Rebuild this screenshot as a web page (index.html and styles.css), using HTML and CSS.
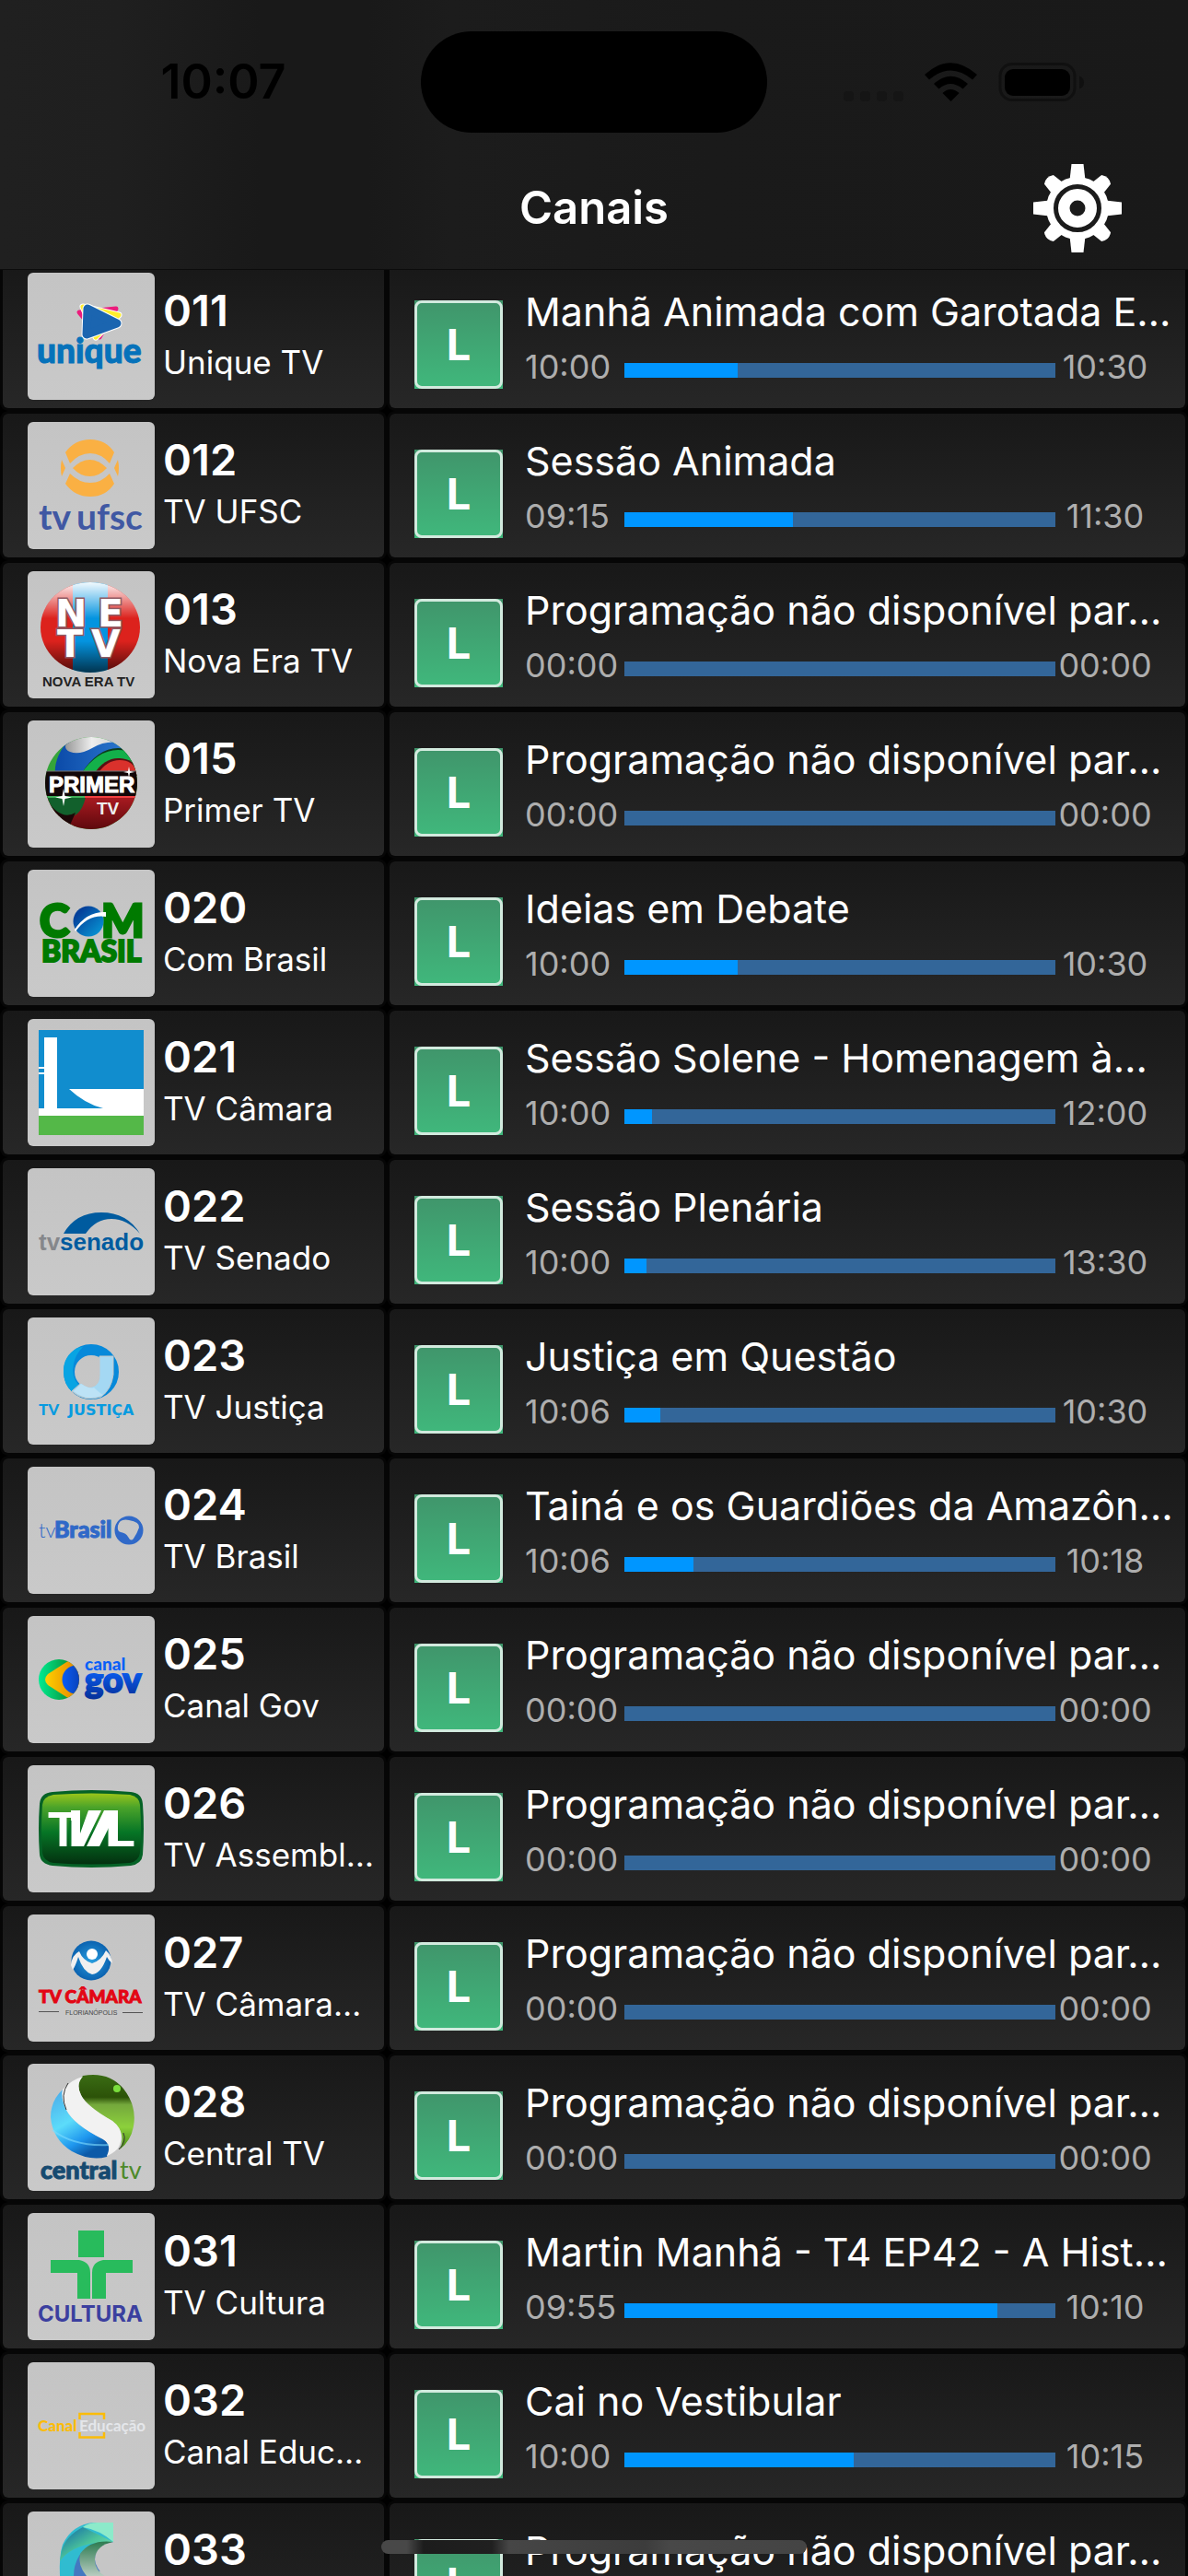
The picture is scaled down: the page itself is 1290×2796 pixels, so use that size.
FILE: index.html
```html
<!DOCTYPE html>
<html lang="pt-BR">
<head>
<meta charset="utf-8">
<meta name="viewport" content="width=device-width, initial-scale=1">
<title>Canais</title>
<link rel="stylesheet" href="styles.css">
</head>
<body>
<div class="app">
<header class="topbar">
  <div class="status">
    <time class="clock">10:07</time>
    <div class="island"></div>
    <svg class="status-icons" viewBox="0 0 264 48" aria-hidden="true">
      <g fill="#151515"><rect x="0" y="34" width="11" height="11" rx="4"/><rect x="18" y="34" width="11" height="11" rx="4"/><rect x="36" y="34" width="11" height="11" rx="4"/><rect x="54" y="34" width="11" height="11" rx="4"/></g>
      <path d="M88 16Q116 -9.500 145 16L140 21.500Q116 1.500 93 21.500Z M98 26Q116 9.500 135 26L129.500 31.500Q116 20.500 103.500 31.500Z M107.500 36Q116 28 125.500 36L116.500 45Z" fill="#000"/>
      <rect x="170" y="4.500" width="81" height="39" rx="13" fill="none" stroke="#101010" stroke-width="3"/>
      <rect x="175" y="10" width="71" height="29" rx="9" fill="#000"/>
      <path d="M256 17.500Q261 19.500 261 24.500T256 31.500Z" fill="#101010"/>
    </svg>
  </div>
  <div class="titlebar">
    <h1>Canais</h1>
    <button class="settings" type="button" aria-label="Configurações">
      <svg viewBox="0 0 96 96" aria-hidden="true">
        <g fill="#fff">
          <path d="M41.500 0H54.500L57 22H39Z"/><path d="M41.500 96H54.500L57 74H39Z"/><path d="M0 41.500V54.500L22 57V39Z"/><path d="M96 41.500V54.500L74 57V39Z"/>
          <g transform="rotate(45 48 48)"><path d="M41 4Q48 -1 55 4L57 22H39Z"/><path d="M41 92Q48 97 55 92L57 74H39Z"/><path d="M4 41Q-1 48 4 55L22 57V39Z"/><path d="M92 41Q97 48 92 55L74 57V39Z"/></g>
          <circle cx="48" cy="48" r="34"/>
        </g>
        <circle cx="48" cy="48" r="23.500" fill="none" stroke="#1b1b1b" stroke-width="5"/>
        <circle cx="48" cy="48" r="8.500" fill="#1b1b1b"/>
      </svg>
    </button>
  </div>
</header>

<main class="guide">
<ul class="rows">
<li class="row">
  <div class="card channel">
    <svg class="logo" viewBox="0 0 138 138" aria-hidden="true">
      <g stroke-linejoin="round">
      <path d="M56 43L96 39L78 70Z" fill="#ec1c7c" stroke="#ec1c7c" stroke-width="5"/>
      <path d="M60 37L99 46L74 70Z" fill="#ffee2e" stroke="#fff" stroke-width="7"/>
      <path d="M60 37L99 46L74 70Z" fill="#ffee2e" stroke="#ffee2e" stroke-width="5"/>
      <path d="M65 39L97 55L64 67Z" fill="#fff" stroke="#fff" stroke-width="11"/>
      <path d="M65 39L97 55L64 67Z" fill="#1b65b0" stroke="#1b65b0" stroke-width="9"/></g>
      <text x="10" y="98" font-family="Lato" font-weight="900" font-size="37" fill="#0672ba" stroke="#0672ba">unique</text>
    </svg>
    <div class="ident"><strong class="num">011</strong><span class="name">Unique TV</span></div>
  </div>
  <div class="card show">
    <span class="badge"><b>L</b></span>
    <div class="info"><h2>Manhã Animada com Garotada E…</h2>
    <div class="slot"><time>10:00</time><progress max="468" value="123" aria-label="Progresso"></progress><time class="end">10:30</time></div></div>
  </div>
</li>
<li class="row">
  <div class="card channel">
    <svg class="logo" viewBox="0 0 138 138" aria-hidden="true">
      <g fill="#fab043"><path d="M41 33Q51 19 68 19T94 33L89 45Q80 34 68 34T46 45Z"/><path d="M41 67Q51 81 68 81T94 67L89 56Q80 66 68 66T46 56Z"/><path d="M49 50Q58 41 67.500 41T86 50Q78 59 67.500 59T49 50Z"/><path d="M37 41L41 50L37 59Q35 50 37 41Z"/><path d="M98 41L94 50L98 59Q100 50 98 41Z"/></g>
      <g font-family="Lato" font-weight="700" font-size="39" fill="#4058a3"><text x="12" y="117">tv</text><text x="53" y="117">ufsc</text></g>
    </svg>
    <div class="ident"><strong class="num">012</strong><span class="name">TV UFSC</span></div>
  </div>
  <div class="card show">
    <span class="badge"><b>L</b></span>
    <div class="info"><h2>Sessão Animada</h2>
    <div class="slot"><time>09:15</time><progress max="468" value="183" aria-label="Progresso"></progress><time class="end">11:30</time></div></div>
  </div>
</li>
<li class="row">
  <div class="card channel">
    <svg class="logo" viewBox="0 0 138 138" aria-hidden="true">
      <defs>
        <linearGradient id="ne"><stop offset=".32" stop-color="#dc221d"/><stop offset=".32" stop-color="#0494e0"/><stop offset=".68" stop-color="#0494e0"/><stop offset=".68" stop-color="#dc221d"/></linearGradient>
        <linearGradient id="neshine" x2="0" y2="1"><stop offset="0" stop-color="#fff" stop-opacity=".95"/><stop offset=".4" stop-color="#fff" stop-opacity="0"/><stop offset=".65" stop-opacity="0"/><stop offset="1" stop-opacity=".65"/></linearGradient>
      </defs>
      <ellipse cx="68" cy="61" rx="54" ry="49" fill="url(#ne)"/><ellipse cx="68" cy="61" rx="54" ry="49" fill="url(#neshine)"/>
      <g font-family="DejaVu Sans" font-weight="700" font-size="41" fill="#fff" stroke="#8f5a62" stroke-width="3" paint-order="stroke"><text x="30" y="60">N</text><text x="76" y="60">E</text><text x="32" y="93">T</text><text x="69" y="93">V</text></g>
      <text x="16" y="125" font-family="Liberation Sans" font-weight="700" font-size="15" fill="#222">NOVA ERA TV</text>
    </svg>
    <div class="ident"><strong class="num">013</strong><span class="name">Nova Era TV</span></div>
  </div>
  <div class="card show">
    <span class="badge"><b>L</b></span>
    <div class="info"><h2>Programação não disponível par…</h2>
    <div class="slot"><time>00:00</time><progress max="468" value="0" aria-label="Progresso"></progress><time class="end">00:00</time></div></div>
  </div>
</li>
<li class="row">
  <div class="card channel">
    <svg class="logo" viewBox="0 0 138 138" aria-hidden="true">
      <defs><clipPath id="pc"><circle cx="69" cy="68" r="50"/></clipPath>
      <linearGradient id="pblue"><stop offset="0" stop-color="#0b4aa8"/><stop offset="1" stop-color="#2d7ad0"/></linearGradient>
      <linearGradient id="pred" x2="0" y2="1"><stop offset="0" stop-color="#b01c22"/><stop offset="1" stop-color="#5a080c"/></linearGradient>
      <linearGradient id="psil"><stop offset="0" stop-color="#999"/><stop offset=".5" stop-color="#eee"/><stop offset="1" stop-color="#ccc"/></linearGradient></defs>
      <g clip-path="url(#pc)"><rect x="19" y="18" width="100" height="100" fill="#35a53a"/>
      <path d="M30 60Q28 42 42 24L108 20L112 32Q82 26 58 60Z" fill="url(#pblue)"/>
      <path d="M58 58Q76 30 98 30T119 50V60H58Z" fill="#0c3d1c"/><path d="M58 58Q76 32 98 32T119 46V60H58Z" fill="#13b04a"/>
      <path d="M72 58Q84 40 100 41T119 54V60H72Z" fill="#5a1013"/><path d="M76 58Q86 43 100 43T119 56V60H76Z" fill="#da312c"/>
      <path d="M41 28Q42 16 72 16T98 24Q84 22 70 30T46 34Q41 32 41 28Z" fill="url(#psil)"/>
      <rect x="19" y="80" width="100" height="40" fill="url(#pred)"/><path d="M19 78H64Q60 104 44 105T19 78Z" fill="#12602c"/><path d="M19 84Q36 110 52 100L44 118H19Z" fill="#1c0607"/>
      <rect x="19" y="55" width="100" height="27" fill="#120708"/><path d="M19 55H119" stroke="#777" stroke-width="1"/><path d="M62 83H119" stroke="#f04040" stroke-width="2"/><path d="M19 83H62" stroke="#3fae58" stroke-width="2"/></g>
      <text x="23" y="78" font-family="Liberation Sans" font-weight="700" font-size="24" fill="#fff" stroke="#fff">PRIMER</text>
      <text x="75" y="102" font-family="Liberation Sans" font-weight="700" font-size="19" fill="#eee">TV</text>
      <path d="M110 50L111 55L116 56L111 57L110 62L109 57L104 56L109 55ZM39 74L40.500 82L48 83.500L40.500 85L39 93L37.500 85L30 83.500L37.500 82Z" fill="#fff"/>
    </svg>
    <div class="ident"><strong class="num">015</strong><span class="name">Primer TV</span></div>
  </div>
  <div class="card show">
    <span class="badge"><b>L</b></span>
    <div class="info"><h2>Programação não disponível par…</h2>
    <div class="slot"><time>00:00</time><progress max="468" value="0" aria-label="Progresso"></progress><time class="end">00:00</time></div></div>
  </div>
</li>
<li class="row">
  <div class="card channel">
    <svg class="logo" viewBox="0 0 138 138" aria-hidden="true">
      <defs><linearGradient id="cb" x2="1" y2="1"><stop offset=".2" stop-color="#04409a"/><stop offset="1" stop-color="#08a0dc"/></linearGradient></defs>
      <g font-family="Lato" font-weight="900" fill="#007a00" stroke="#007a00"><g font-size="49" stroke-width="3"><text x="13" y="73">C</text><text x="80" y="73">M</text></g><text x="15" y="100" font-size="32" stroke-width="2">BRASIL</text></g>
      <circle cx="66" cy="56" r="16.500" fill="url(#cb)"/><path d="M51 65Q64 45 85 46V51Q66 48 52 67Z" fill="#fff"/>
    </svg>
    <div class="ident"><strong class="num">020</strong><span class="name">Com Brasil</span></div>
  </div>
  <div class="card show">
    <span class="badge"><b>L</b></span>
    <div class="info"><h2>Ideias em Debate</h2>
    <div class="slot"><time>10:00</time><progress max="468" value="123" aria-label="Progresso"></progress><time class="end">10:30</time></div></div>
  </div>
</li>
<li class="row">
  <div class="card channel">
    <svg class="logo" viewBox="0 0 138 138" aria-hidden="true">
      <rect x="12" y="12" width="114" height="94" fill="#118dce"/><rect x="12" y="105" width="114" height="21" fill="#54b848"/>
      <path d="M18 20H32V97H82Q62 92 45 76H126V105H12V97H18ZM12 52H18V54H12ZM12 58H18V60H12Z" fill="#fff"/>
    </svg>
    <div class="ident"><strong class="num">021</strong><span class="name">TV Câmara</span></div>
  </div>
  <div class="card show">
    <span class="badge"><b>L</b></span>
    <div class="info"><h2>Sessão Solene - Homenagem à…</h2>
    <div class="slot"><time>10:00</time><progress max="468" value="30" aria-label="Progresso"></progress><time class="end">12:00</time></div></div>
  </div>
</li>
<li class="row">
  <div class="card channel">
    <svg class="logo" viewBox="0 0 138 138" aria-hidden="true">
      <path d="M39 71Q52 48 80 48T122 71Q108 55 91 55T63 71Z" fill="#005b9f"/>
      <g font-family="Liberation Sans" font-weight="700" font-size="26"><text x="12" y="89" fill="#85878b">tv</text><text x="35" y="89" fill="#005b9f">senado</text></g>
    </svg>
    <div class="ident"><strong class="num">022</strong><span class="name">TV Senado</span></div>
  </div>
  <div class="card show">
    <span class="badge"><b>L</b></span>
    <div class="info"><h2>Sessão Plenária</h2>
    <div class="slot"><time>10:00</time><progress max="468" value="24" aria-label="Progresso"></progress><time class="end">13:30</time></div></div>
  </div>
</li>
<li class="row">
  <div class="card channel">
    <svg class="logo" viewBox="0 0 138 138" aria-hidden="true">
      <circle cx="69" cy="59" r="24" fill="none" stroke="#0689da" stroke-width="12"/>
      <path d="M54 33Q38 42 39 60Q40 74 48 80L55 73Q47 64 50 50Q52 40 60 32Z" fill="#08a4e3"/>
      <path d="M78 42H93V62Q91 78 80 86Q62 92 48 80L58 71Q66 78 73 74Q78 71 78 62Z" fill="#a4d8f3" stroke="#c6c6c6"/>
      <path d="M50 80L58 72Q68 78 72 76Q78 82 82 84Q64 92 50 80Z" fill="#bce2f6"/>
      <g font-family="Lato" font-weight="900" font-size="17" fill="#079be0"><text x="12" y="106">TV</text><text x="44" y="106" font-family="DejaVu Sans" font-weight="700" font-size="16">JUSTIÇA</text></g>
    </svg>
    <div class="ident"><strong class="num">023</strong><span class="name">TV Justiça</span></div>
  </div>
  <div class="card show">
    <span class="badge"><b>L</b></span>
    <div class="info"><h2>Justiça em Questão</h2>
    <div class="slot"><time>10:06</time><progress max="468" value="39" aria-label="Progresso"></progress><time class="end">10:30</time></div></div>
  </div>
</li>
<li class="row">
  <div class="card channel">
    <svg class="logo" viewBox="0 0 138 138" aria-hidden="true">
      <g fill="#3069c8"><text x="12" y="77" font-family="Lato" font-weight="300" font-size="22">tv</text><text x="29" y="77" font-family="Lato" font-weight="900" font-size="25" stroke="#3069c8">Brasil</text>
      <path fill-rule="evenodd" d="M110 53.500A15.500 15.500 0 1 1 110 84.500A15.500 15.500 0 1 1 110 53.500ZM98 64Q100 56 110 58Q122 60 121 66Q119 72 115 78Q112 82 109 76Q107 72 101 71Q97 70 98 64Z"/></g>
    </svg>
    <div class="ident"><strong class="num">024</strong><span class="name">TV Brasil</span></div>
  </div>
  <div class="card show">
    <span class="badge"><b>L</b></span>
    <div class="info"><h2>Tainá e os Guardiões da Amazôn…</h2>
    <div class="slot"><time>10:06</time><progress max="468" value="75" aria-label="Progresso"></progress><time class="end">10:18</time></div></div>
  </div>
</li>
<li class="row">
  <div class="card channel">
    <svg class="logo" viewBox="0 0 138 138" aria-hidden="true">
      <defs><clipPath id="gc"><circle cx="34" cy="69" r="22"/></clipPath>
      <linearGradient id="gg"><stop offset="0" stop-color="#00eb91"/><stop offset="1" stop-color="#0a7a20"/></linearGradient>
      <linearGradient id="gy"><stop offset="0" stop-color="#ffd000"/><stop offset="1" stop-color="#e07a00"/></linearGradient>
      <linearGradient id="gb"><stop offset="0" stop-color="#0a5cf5"/><stop offset="1" stop-color="#083296"/></linearGradient>
      <linearGradient id="gt" x2="0" y2="1"><stop offset=".2" stop-color="#0a63ff"/><stop offset="1" stop-color="#062f96"/></linearGradient></defs>
      <g clip-path="url(#gc)"><rect x="12" y="47" width="44" height="44" fill="url(#gg)"/><path d="M22 63L50 45L60 69L50 93L22 75Q16 69 22 63Z" fill="url(#gy)"/><circle cx="53" cy="69" r="15.500" fill="url(#gb)"/></g>
      <g font-family="Lato" font-weight="900"><text x="62" y="59" font-size="19" fill="#0a5ff8">canal</text><text x="62" y="83" font-size="38" fill="url(#gt)" stroke="url(#gt)" stroke-width="2">gov</text></g>
    </svg>
    <div class="ident"><strong class="num">025</strong><span class="name">Canal Gov</span></div>
  </div>
  <div class="card show">
    <span class="badge"><b>L</b></span>
    <div class="info"><h2>Programação não disponível par…</h2>
    <div class="slot"><time>00:00</time><progress max="468" value="0" aria-label="Progresso"></progress><time class="end">00:00</time></div></div>
  </div>
</li>
<li class="row">
  <div class="card channel">
    <svg class="logo" viewBox="0 0 138 138" aria-hidden="true">
      <defs><linearGradient id="tl" x2="0" y2="1"><stop offset="0" stop-color="#9ac51a"/><stop offset=".2" stop-color="#4aa32a"/><stop offset=".55" stop-color="#067526"/><stop offset="1" stop-color="#03300f"/></linearGradient></defs>
      <path d="M27 29Q69 25 112 29Q124 30 125 42Q127 69 125 97Q124 107 112 109Q69 113 27 109Q14 107 13 97Q11 69 13 42Q14 30 27 29Z" fill="#056226"/>
      <path d="M28 32Q69 29 111 32Q121 34 122 43Q124 69 122 95Q121 104 111 106Q69 109 28 106Q17 104 16 95Q14 69 16 43Q17 34 28 32Z" fill="url(#tl)"/>
      <g font-family="Liberation Sans" font-weight="700" font-size="54" fill="#fff"><text x="22" y="88">T</text><text x="84" y="88">L</text></g>
      <path d="M47 49H57V74L66 49H80L61 88H47ZM64 88L83 49H98V88H89V66L78 88Z" fill="#fff"/>
      <path d="M46.500 60V88" stroke="#067526" stroke-width="2"/>
    </svg>
    <div class="ident"><strong class="num">026</strong><span class="name">TV Assembl…</span></div>
  </div>
  <div class="card show">
    <span class="badge"><b>L</b></span>
    <div class="info"><h2>Programação não disponível par…</h2>
    <div class="slot"><time>00:00</time><progress max="468" value="0" aria-label="Progresso"></progress><time class="end">00:00</time></div></div>
  </div>
</li>
<li class="row">
  <div class="card channel">
    <svg class="logo" viewBox="0 0 138 138" aria-hidden="true">
      <defs><radialGradient id="cf"><stop offset="0" stop-color="#2ba0e0"/><stop offset="1" stop-color="#0a62b0"/></radialGradient></defs>
      <circle cx="69" cy="50" r="21.500" fill="url(#cf)"/><path d="M47 55Q48 44 56 40Q60 50 70 53Q80 50 85 39Q91 44 92 53Q88 50 86 46Q80 64 70 65Q60 62 55 46Q52 56 49 60Z" fill="#f0f0f0"/><circle cx="70" cy="43" r="6" fill="#fff"/>
      <text x="12" y="96" font-family="Lato" font-weight="900" font-size="19" fill="#e30614" stroke="#e30614">TV CÂMARA</text>
      <text x="41" y="109" font-family="Liberation Sans" font-size="7" fill="#444">FLORIANÓPOLIS</text><path d="M12 105.500H34M103 106.500H125" stroke="#555"/>
    </svg>
    <div class="ident"><strong class="num">027</strong><span class="name">TV Câmara…</span></div>
  </div>
  <div class="card show">
    <span class="badge"><b>L</b></span>
    <div class="info"><h2>Programação não disponível par…</h2>
    <div class="slot"><time>00:00</time><progress max="468" value="0" aria-label="Progresso"></progress><time class="end">00:00</time></div></div>
  </div>
</li>
<li class="row">
  <div class="card channel">
    <svg class="logo" viewBox="0 0 138 138" aria-hidden="true">
      <defs><linearGradient id="ctb" x2=".5" y2="1"><stop offset="0" stop-color="#4aa8e8"/><stop offset=".5" stop-color="#5cdcfa"/><stop offset=".8" stop-color="#1e96ee"/><stop offset="1" stop-color="#0c5aa8"/></linearGradient>
      <linearGradient id="ctg" x2="0" y2="1"><stop offset="0" stop-color="#3a6c14"/><stop offset=".3" stop-color="#2c5208"/><stop offset=".4" stop-color="#74a83c"/><stop offset=".7" stop-color="#8cd03c"/><stop offset="1" stop-color="#478a14"/></linearGradient></defs>
      <path d="M38 28Q25 40 25 58Q27 82 48 95Q68 106 86 101Q92 88 82 82Q50 66 42 50Q36 38 38 28Z" fill="url(#ctb)"/>
      <path d="M60 13Q88 8 104 27Q119 46 115 68Q112 84 100 93Q108 76 92 62Q64 48 58 34Q52 22 60 13Z" fill="url(#ctg)"/>
      <path d="M38 28Q48 17 60 14Q52 22 58 34Q64 46 92 62Q108 74 98 92Q92 98 86 100Q92 88 82 82Q50 66 42 50Q36 38 38 28Z" fill="#f2f2f2"/>
      <path d="M44 21Q35 34 42 50M104 75Q108 84 99 93" fill="none" stroke="#333"/><circle cx="97" cy="27" r="4" fill="#8dff4a" opacity=".8"/>
      <path d="M27 72Q50 90 88 88" fill="none" stroke="#7fdcff" opacity=".6" stroke-width="2"/>
      <g font-family="Lato" font-size="27"><text x="14" y="125" font-weight="900" fill="#164a70" stroke="#164a70">central</text><text x="100" y="125" font-weight="400" fill="#4d8a2a">tv</text></g>
    </svg>
    <div class="ident"><strong class="num">028</strong><span class="name">Central TV</span></div>
  </div>
  <div class="card show">
    <span class="badge"><b>L</b></span>
    <div class="info"><h2>Programação não disponível par…</h2>
    <div class="slot"><time>00:00</time><progress max="468" value="0" aria-label="Progresso"></progress><time class="end">00:00</time></div></div>
  </div>
</li>
<li class="row">
  <div class="card channel">
    <svg class="logo" viewBox="0 0 138 138" aria-hidden="true">
      <path d="M55 19H83V48H55ZM25 51H56Q68 53 68 65V93H54V65H25ZM114 51H82Q70 53 70 65V93H85V65H114Z" fill="#28bb5c"/>
      <text x="11" y="118" font-family="Inter" font-weight="700" font-size="24" fill="#3b3f9f">CULTURA</text>
    </svg>
    <div class="ident"><strong class="num">031</strong><span class="name">TV Cultura</span></div>
  </div>
  <div class="card show">
    <span class="badge"><b>L</b></span>
    <div class="info"><h2>Martin Manhã - T4 EP42 - A Hist…</h2>
    <div class="slot"><time>09:55</time><progress max="468" value="405" aria-label="Progresso"></progress><time class="end">10:10</time></div></div>
  </div>
</li>
<li class="row">
  <div class="card channel">
    <svg class="logo" viewBox="0 0 138 138" aria-hidden="true">
      <g font-family="Lato" font-size="17"><text x="11" y="75" font-weight="900" fill="#fbbc08">Canal</text><text x="56" y="75" font-weight="700" fill="#e4e6ea">Educação</text></g>
      <path d="M56.500 62V56H83V62M56.500 76V81.500H83V76" fill="none" stroke="#fbbc08" stroke-width="2.500"/>
    </svg>
    <div class="ident"><strong class="num">032</strong><span class="name">Canal Educ…</span></div>
  </div>
  <div class="card show">
    <span class="badge"><b>L</b></span>
    <div class="info"><h2>Cai no Vestibular</h2>
    <div class="slot"><time>10:00</time><progress max="468" value="249" aria-label="Progresso"></progress><time class="end">10:15</time></div></div>
  </div>
</li>
<li class="row">
  <div class="card channel">
    <svg class="logo" viewBox="0 0 138 138" aria-hidden="true">
      <defs><linearGradient id="cc" y2="1"><stop offset="0" stop-color="#0d62a8"/><stop offset=".5" stop-color="#4cc49a"/><stop offset="1" stop-color="#7ee8c0"/></linearGradient>
      <linearGradient id="cd" x2="0" y2="1"><stop offset="0" stop-color="#2c7a50"/><stop offset="1" stop-color="#b8ccc0"/></linearGradient></defs>
      <path d="M93 12H72Q48 14 38 36Q34 48 35 70H74V33H93Z" fill="#30bcd0"/>
      <path d="M60 17Q42 26 37 42L35 54Q46 38 74 34L93 33Z" fill="url(#cc)"/>
      <path d="M60 17Q66 12 76 12H93V33Q78 20 60 17Z" fill="#8ceaca"/>
      <path d="M93 33Q66 32 56 48Q50 58 50 70H76Z" fill="#4478c0"/>
      <path d="M93 33Q68 30 57 46Q54 58 64 70H84Q73 64 73 52Q74 38 93 33Z" fill="url(#cd)"/>
      <path d="M94 33Q74 36 73 52Q74 62 84 70H94Z" fill="#c6c6c6"/>
    </svg>
    <div class="ident"><strong class="num">033</strong></div>
  </div>
  <div class="card show">
    <span class="badge"><b>L</b></span>
    <div class="info"><h2>Programação não disponível par…</h2></div>
  </div>
</li>
</ul>
</main>
<div class="home-indicator"></div>
</div>
</body>
</html>
```
FILE: styles.css
```css
* {
  box-sizing: border-box;
}

body {
  margin: 0;
  background: #000;
  color: #fff;
  font-family: Inter, "Liberation Sans", sans-serif;
}

.app {
  position: relative;
  display: flex;
  flex-direction: column;
  height: 100vh;
  overflow: hidden;
}

/* Status bar and title */
.topbar {
  flex: none;
  background: linear-gradient(90deg, #202020, #1f1f1f 10%, #191919 22%, #191919 31%, #1c1c1c 38%, #1a1a1a 60%, #191919);
  border-bottom: 1px solid #0c0c0c;
}

.status {
  display: grid;
  grid-template-columns: 1fr 376px 1fr;
  align-items: center;
  height: 178px;
}

.clock {
  justify-self: center;
  padding-left: 28px;
  color: #000;
  font-size: 52px;
  font-weight: 600;
  line-height: 64px;
}

.island {
  height: 110px;
  border-radius: 55px;
  background: #000;
}

.status-icons {
  justify-self: center;
  width: 264px;
  height: 48px;
  margin-right: 28px;
}

.titlebar {
  display: grid;
  grid-template-columns: 1fr auto 1fr;
  align-items: center;
  padding: 0 72px 18px;
}

.titlebar h1 {
  grid-column: 2;
  margin: 0;
  font-size: 49px;
  font-weight: 600;
  line-height: 64px;
}

.settings {
  justify-self: end;
  width: 96px;
  height: 96px;
  padding: 0;
  border: 0;
  background: none;
}

.settings svg {
  display: block;
}

/* Channel guide */
.guide {
  flex: 1;
  min-height: 0;
  overflow-y: auto;
  scrollbar-width: none;
}

.rows {
  display: grid;
  gap: 6px;
  margin: -6px 0 0;
  padding: 0 3px;
  list-style: none;
}

.row {
  display: grid;
  grid-template-columns: 414px minmax(0, 1fr);
  gap: 6px;
}

.card {
  display: flex;
  height: 156px;
  border-radius: 6px;
  background: linear-gradient(#181818, #272727);
  box-shadow: 0 0 0 3px #060606;
}

.channel {
  gap: 9px;
  padding: 9px 0 9px 27px;
}

.logo {
  flex: none;
  width: 138px;
  height: 138px;
  border-radius: 6px;
  background: linear-gradient(#c4c4c4, #c9c9c9);
}

.ident {
  display: flex;
  flex-direction: column;
  min-width: 0;
  padding-top: 13px;
  line-height: 56px;
  white-space: nowrap;
}

.num {
  font-size: 47px;
  font-weight: 600;
}

.name {
  font-size: 35px;
}

.show {
  gap: 24px;
  padding-left: 27px;
}

.badge {
  flex: none;
  width: 96px;
  height: 96px;
  margin-top: 39px;
  background: linear-gradient(#40956b, #40b87c);
}

.badge b {
  display: block;
  border: 3px solid #d2eade;
  border-radius: 8px;
  font-size: 47px;
  line-height: 90px;
  text-align: center;
}

.info {
  flex: 1;
  min-width: 0;
  padding-top: 23px;
}

.info h2 {
  margin: 0;
  font-size: 43px;
  font-weight: 400;
  line-height: 56px;
  white-space: nowrap;
}

.slot {
  display: flex;
  align-items: center;
  padding-right: 33px;
  color: #aeaeae;
  font-size: 36px;
  line-height: 64px;
}

.slot time {
  flex: none;
  width: 108px;
}

.slot .end {
  text-align: center;
}

progress {
  flex: 1;
  min-width: 0;
  height: 16px;
  margin-top: 8px;
  border: 0;
  appearance: none;
  background: #336699;
}

progress::-webkit-progress-bar {
  background: #336699;
}

progress::-webkit-progress-value {
  background: #0096ff;
}

/* Lies over the list at the bottom of the screen */
.home-indicator {
  position: absolute;
  bottom: 24px;
  left: 50%;
  width: 462px;
  height: 15px;
  margin-left: -231px;
  border-radius: 8px;
  background: linear-gradient(90deg, #484848 6%, #1c1c1c 10%, #202020 26%, #464646 30%, #3c3c3c 62%, #484848 68%, #444);
}
```
